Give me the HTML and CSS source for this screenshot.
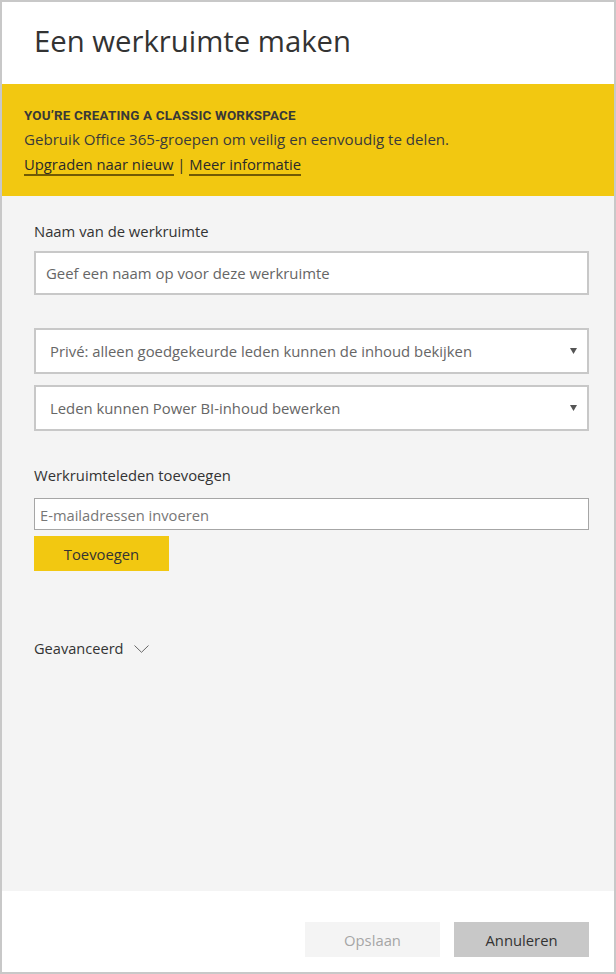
FILE: index.html
```html
<!DOCTYPE html>
<html lang="nl">
<head>
<meta charset="utf-8">
<title>Een werkruimte maken</title>
<link rel="stylesheet" href="styles.css">
</head>
<body>
<div class="dialog">
  <header class="header">
    <h1 class="title">Een werkruimte maken</h1>
  </header>
  <section class="banner">
    <div class="banner-head">YOU’RE CREATING A CLASSIC WORKSPACE</div>
    <div class="banner-text">Gebruik Office 365-groepen om veilig en eenvoudig te delen.</div>
    <div class="banner-links"><a class="link">Upgraden naar nieuw</a> | <a class="link">Meer informatie</a></div>
  </section>
  <main class="content">
    <div class="label">Naam van de werkruimte</div>
    <div class="field name-field">Geef een naam op voor deze werkruimte</div>
    <div class="select first">
      <span>Privé: alleen goedgekeurde leden kunnen de inhoud bekijken</span>
      <svg class="caret" width="7" height="6" viewBox="0 0 7 6"><polygon points="0,0 7,0 3.5,6" fill="#555"/></svg>
    </div>
    <div class="select second">
      <span>Leden kunnen Power BI-inhoud bewerken</span>
      <svg class="caret" width="7" height="6" viewBox="0 0 7 6"><polygon points="0,0 7,0 3.5,6" fill="#555"/></svg>
    </div>
    <div class="label members">Werkruimteleden toevoegen</div>
    <div class="email">E-mailadressen invoeren</div>
    <div class="btn btn-add">Toevoegen</div>
    <div class="advanced">Geavanceerd
      <svg class="chev" width="15" height="8" viewBox="0 0 15 8"><polyline points="0.5,0.5 7.5,7.3 14.5,0.5" fill="none" stroke="#666" stroke-width="1"/></svg>
    </div>
  </main>
  <footer class="footer">
    <div class="btn btn-save">Opslaan</div>
    <div class="btn btn-cancel">Annuleren</div>
  </footer>
</div>
</body>
</html>
```
FILE: styles.css
```css
html, body {
  margin: 0;
  padding: 0;
  background: #ffffff;
}
.dialog {
  width: 616px;
  height: 974px;
  box-sizing: border-box;
  border: 2px solid #c8c8c8;
  display: flex;
  flex-direction: column;
  font-family: "Open Sans", "Noto Sans", sans-serif;
  color: #333333;
}
.header {
  height: 82px;
  box-sizing: border-box;
  padding: 19px 0 0 32px;
  background: #ffffff;
}
.title {
  margin: 0;
  font-size: 29.3px;
  font-weight: 400;
  line-height: 40px;
  color: #333333;
}
.banner {
  height: 112px;
  box-sizing: border-box;
  background: #f2c811;
  padding: 23px 0 0 22px;
}
.banner-head {
  font-family: Roboto, "Liberation Sans", sans-serif;
  font-weight: 700;
  font-size: 13.4px;
  line-height: 17px;
  letter-spacing: 0.2px;
  color: #383838;
}
.banner-text {
  margin-top: 3px;
  font-size: 15.1px;
  line-height: 24px;
  color: #3a3a3a;
}
.banner-links {
  margin-top: 1px;
  font-size: 14.8px;
  line-height: 24px;
  color: #2a2a2a;
}
.link {
  border-bottom: 2px solid rgba(70, 55, 0, 0.75);
}
.content {
  flex: 1;
  background: #f4f4f4;
  padding: 25px 25px 0 32px;
  display: flex;
  flex-direction: column;
  align-items: stretch;
}
.label {
  font-size: 14.8px;
  line-height: 20px;
  color: #333333;
}
.field {
  margin-top: 10px;
  height: 44px;
  box-sizing: border-box;
  border: 2px solid #c8c8c8;
  background: #ffffff;
  padding-left: 10px;
  display: flex;
  align-items: center;
  font-size: 14.9px;
  color: #666666;
}
.select {
  height: 46px;
  box-sizing: border-box;
  border: 2px solid #c8c8c8;
  background: #ffffff;
  padding: 0 10px 0 14px;
  display: flex;
  align-items: center;
  justify-content: space-between;
  font-size: 14.85px;
  color: #666666;
}
.select.first {
  margin-top: 33px;
}
.select.second {
  margin-top: 11px;
}
.caret {
  display: block;
}
.label.members {
  margin-top: 34px;
}
.email {
  margin-top: 13px;
  height: 32px;
  box-sizing: border-box;
  border: 1px solid #a6a6a6;
  background: #ffffff;
  padding: 1px 0 0 5px;
  display: flex;
  align-items: center;
  font-size: 14.7px;
  color: #777777;
}
.btn {
  width: 135px;
  height: 35px;
  display: flex;
  align-items: center;
  justify-content: center;
  font-size: 14.8px;
  box-sizing: border-box;
}
.btn-add {
  margin-top: 6px;
  background: #f2c811;
  color: #333333;
}
.advanced {
  margin-top: 67px;
  font-size: 14.6px;
  line-height: 20px;
  color: #333333;
  display: flex;
  align-items: center;
}
.chev {
  margin-left: 10px;
  margin-top: 1px;
}
.footer {
  height: 81px;
  box-sizing: border-box;
  background: #ffffff;
  padding: 31px 25px 0 0;
  display: flex;
  justify-content: flex-end;
  gap: 14px;
}
.btn-save {
  background: #f4f4f4;
  color: #a6a6a6;
}
.btn-cancel {
  background: #c8c8c8;
  color: #333333;
}
```
